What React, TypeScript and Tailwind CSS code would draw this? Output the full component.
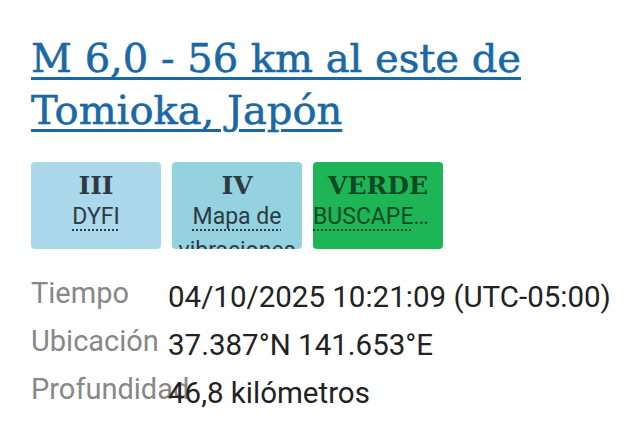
const serif = { fontFamily: '"DejaVu Serif", "Liberation Serif", serif' }

function Badge({ value, label, bg, color }: { value: string; label: string; bg: string; color: string }) {
  return (
    <div className={`w-[130px] h-[87px] rounded-[4px] overflow-hidden flex flex-col items-center pt-[9px] ${bg} ${color}`}>
      <div className="text-[25px] font-bold leading-[30px]" style={serif}>{value}</div>
      <div className="-mt-[1px] w-full text-[23px] leading-[34px] text-center overflow-hidden text-ellipsis">
        <span className="underline decoration-dotted decoration-2 underline-offset-[5px]">{label}</span>
      </div>
    </div>
  )
}

export default function App() {
  return (
    <div className="w-[640px] h-[433px] bg-white px-[31px] pt-[32px] overflow-hidden" style={{ fontFamily: 'Roboto, "Liberation Sans", sans-serif' }}>
      <h1 className="text-[40px] leading-[52px] text-[#1a69a4] underline decoration-[3px] underline-offset-[5px] [-webkit-text-stroke:0.6px_#1a69a4]" style={serif}>
        M 6,0 - 56 km al este de Tomioka, Japón
      </h1>
      <div className="flex gap-[11px] mt-[26px]">
        <Badge value="III" label="DYFI" bg="bg-[#abd8ea]" color="text-[#2e3a42]" />
        <Badge value="IV" label="Mapa de vibraciones" bg="bg-[#94d2e0]" color="text-[#2e3a42]" />
        <div className="w-[130px] h-[87px] rounded-[4px] overflow-hidden flex flex-col items-center pt-[9px] bg-[#1db556] text-[#0d4a24]">
          <div className="text-[25px] font-bold leading-[30px]" style={serif}>VERDE</div>
          <div className="-mt-[1px] w-full text-[23px] leading-[34px] whitespace-nowrap overflow-hidden text-ellipsis">
            <span className="underline decoration-dotted decoration-2 underline-offset-[5px]">BUSCAPERDIDAS</span>
          </div>
        </div>
      </div>
      <div className="grid grid-cols-[137px_1fr] mt-[24px] text-[29.5px] leading-[48px]">
        <div className="text-[#888] text-[29px] -mt-[4px] whitespace-nowrap">Tiempo</div>
        <div className="text-[#222] whitespace-nowrap">04/10/2025 10:21:09 (UTC-05:00)</div>
        <div className="text-[#888] text-[29px] -mt-[4px] whitespace-nowrap">Ubicación</div>
        <div className="text-[#222] whitespace-nowrap">37.387°N 141.653°E</div>
        <div className="text-[#888] text-[29px] -mt-[4px] whitespace-nowrap">Profundidad</div>
        <div className="text-[#222] whitespace-nowrap">46,8 kilómetros</div>
      </div>
    </div>
  )
}
